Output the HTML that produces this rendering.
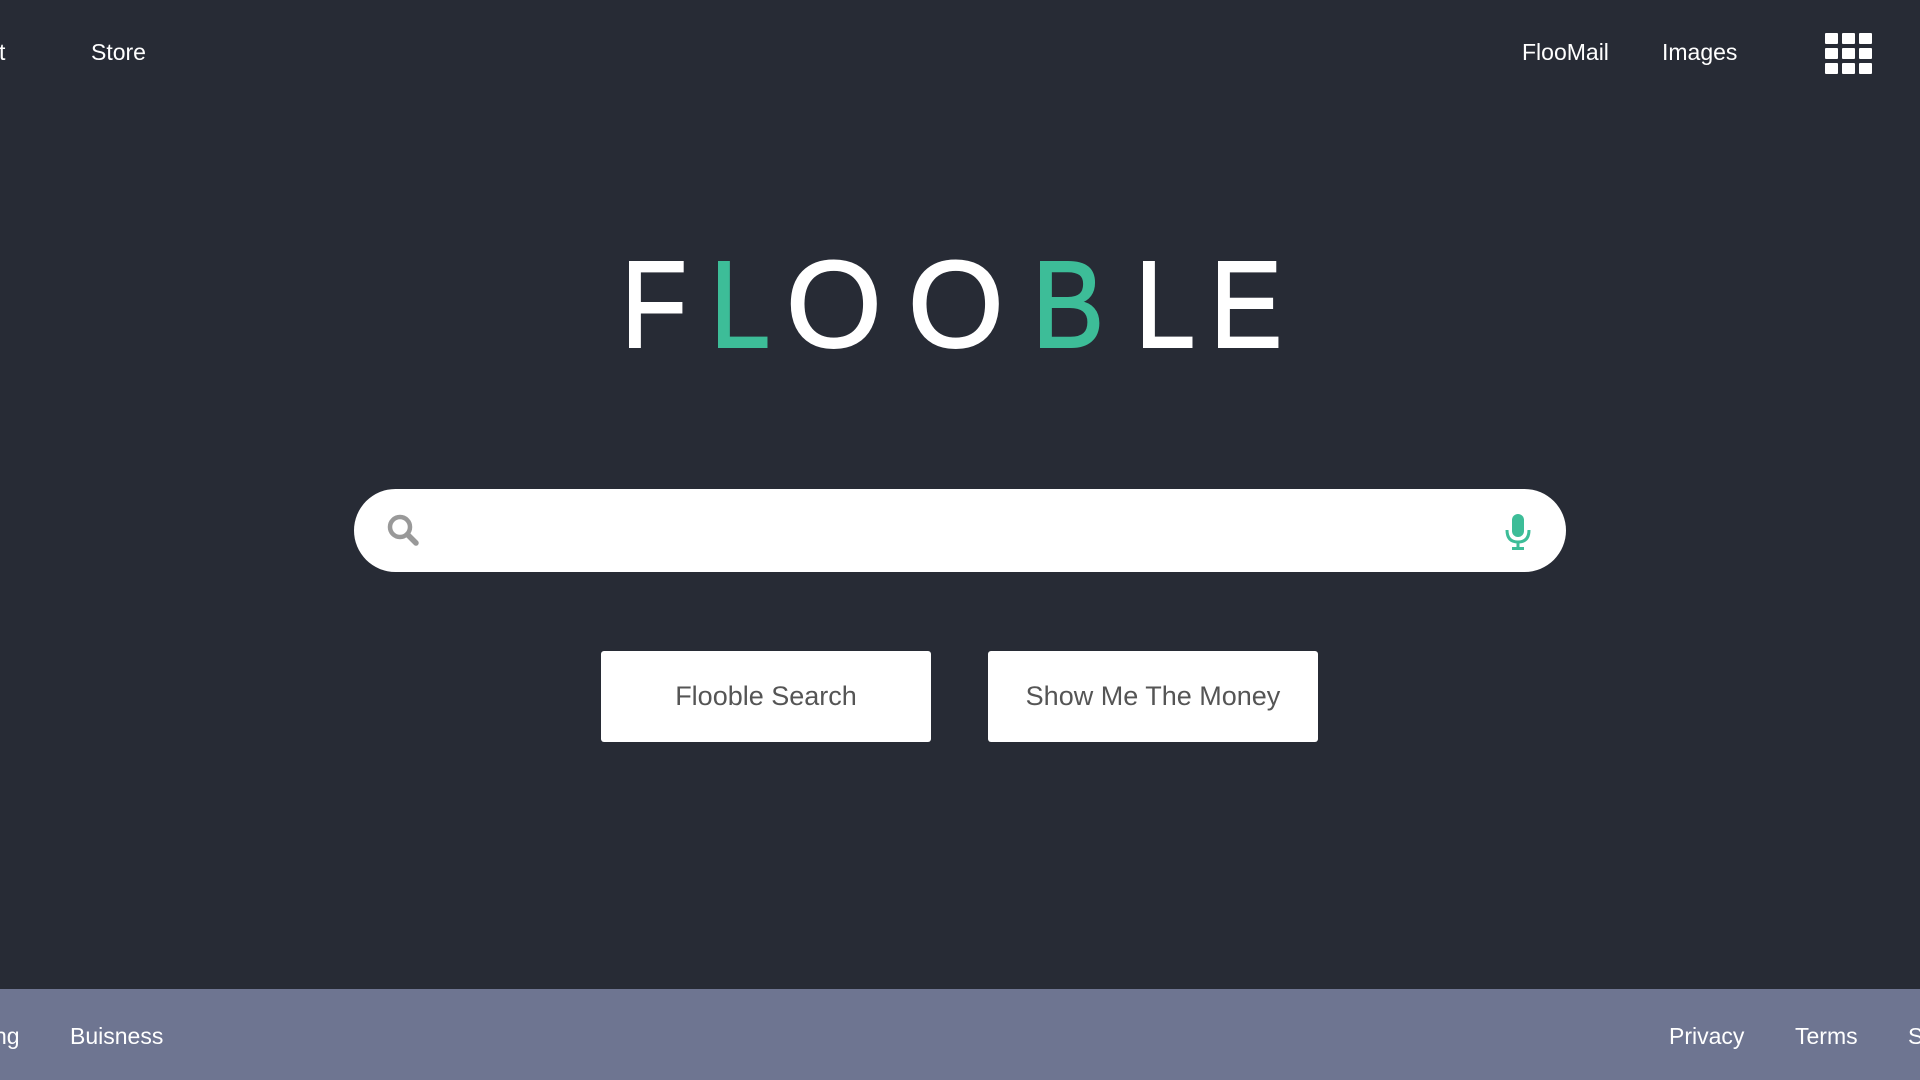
<!DOCTYPE html>
<html><head><meta charset="utf-8"><style>
html,body{margin:0;padding:0;width:1920px;height:1080px;overflow:hidden;background:#272b35;font-family:"Liberation Sans",Arial,sans-serif;}
.a{position:absolute;white-space:nowrap}
.nav{color:#fff;font-size:23px;top:39px}
.logo span{position:absolute;top:236px;font-size:123px;line-height:140px;color:#fff;font-weight:normal;-webkit-text-stroke:2px #fff;transform:scaleX(0.88);transform-origin:left center}
.logo span.o{transform:none}
.logo span.g{color:#3dbd98;-webkit-text-stroke:2px #3dbd98}
.search{position:absolute;left:354px;top:489px;width:1212px;height:83px;border-radius:42px;background:#fff}
.btn{position:absolute;top:651px;width:330px;height:91px;background:#fff;border-radius:3px;color:#555;font-size:27px;text-align:center;line-height:91px}
.foot{position:absolute;left:0;top:989px;width:1920px;height:91px;background:#6e7591}
.foot .a{color:#fff;font-size:23px;top:34px}
</style></head><body>
<div class="a nav" style="left:-1px">t</div>
<div class="a nav" style="left:91px">Store</div>
<div class="a nav" style="left:1522px">FlooMail</div>
<div class="a nav" style="left:1662px">Images</div>
<svg class="a" style="left:1825px;top:33px" width="47" height="41" viewBox="0 0 47 41">
<g fill="#fff">
<rect x="0" y="0" width="13" height="11" rx="1"/><rect x="17" y="0" width="13" height="11" rx="1"/><rect x="34" y="0" width="13" height="11" rx="1"/>
<rect x="0" y="15" width="13" height="11" rx="1"/><rect x="17" y="15" width="13" height="11" rx="1"/><rect x="34" y="15" width="13" height="11" rx="1"/>
<rect x="0" y="30" width="13" height="11" rx="1"/><rect x="17" y="30" width="13" height="11" rx="1"/><rect x="34" y="30" width="13" height="11" rx="1"/>
</g></svg>
<div class="logo">
<span style="left:621px">F</span>
<span class="g" style="left:710px">L</span>
<span class="o" style="left:786px">O</span>
<span class="o" style="left:908px">O</span>
<span class="g" style="left:1032px">B</span>
<span style="left:1135px">L</span>
<span style="left:1210px">E</span>
</div>
<div class="search"></div>
<svg class="a" style="left:385px;top:512px" width="38" height="38" viewBox="0 0 38 38">
<circle cx="15" cy="15" r="10" fill="none" stroke="#999" stroke-width="4.5"/>
<line x1="22.5" y1="22.5" x2="31" y2="31" stroke="#999" stroke-width="5.5" stroke-linecap="round"/>
</svg>
<svg class="a" style="left:1503px;top:512px" width="30" height="40" viewBox="0 0 30 40">
<rect x="9" y="2" width="12" height="23" rx="6" fill="#3dbd98"/>
<path d="M4 18 Q4 30 15 30 Q26 30 26 18" fill="none" stroke="#3dbd98" stroke-width="3"/>
<line x1="15" y1="30" x2="15" y2="36" stroke="#3dbd98" stroke-width="3"/>
<line x1="9" y1="36.5" x2="21" y2="36.5" stroke="#3dbd98" stroke-width="3"/>
</svg>
<div class="btn" style="left:601px">Flooble Search</div>
<div class="btn" style="left:988px">Show Me The Money</div>
<div class="foot">
<div class="a" style="left:-6px">ng</div>
<div class="a" style="left:70px">Buisness</div>
<div class="a" style="left:1669px">Privacy</div>
<div class="a" style="left:1795px">Terms</div>
<div class="a" style="left:1908px">S</div>
</div>
</body></html>
